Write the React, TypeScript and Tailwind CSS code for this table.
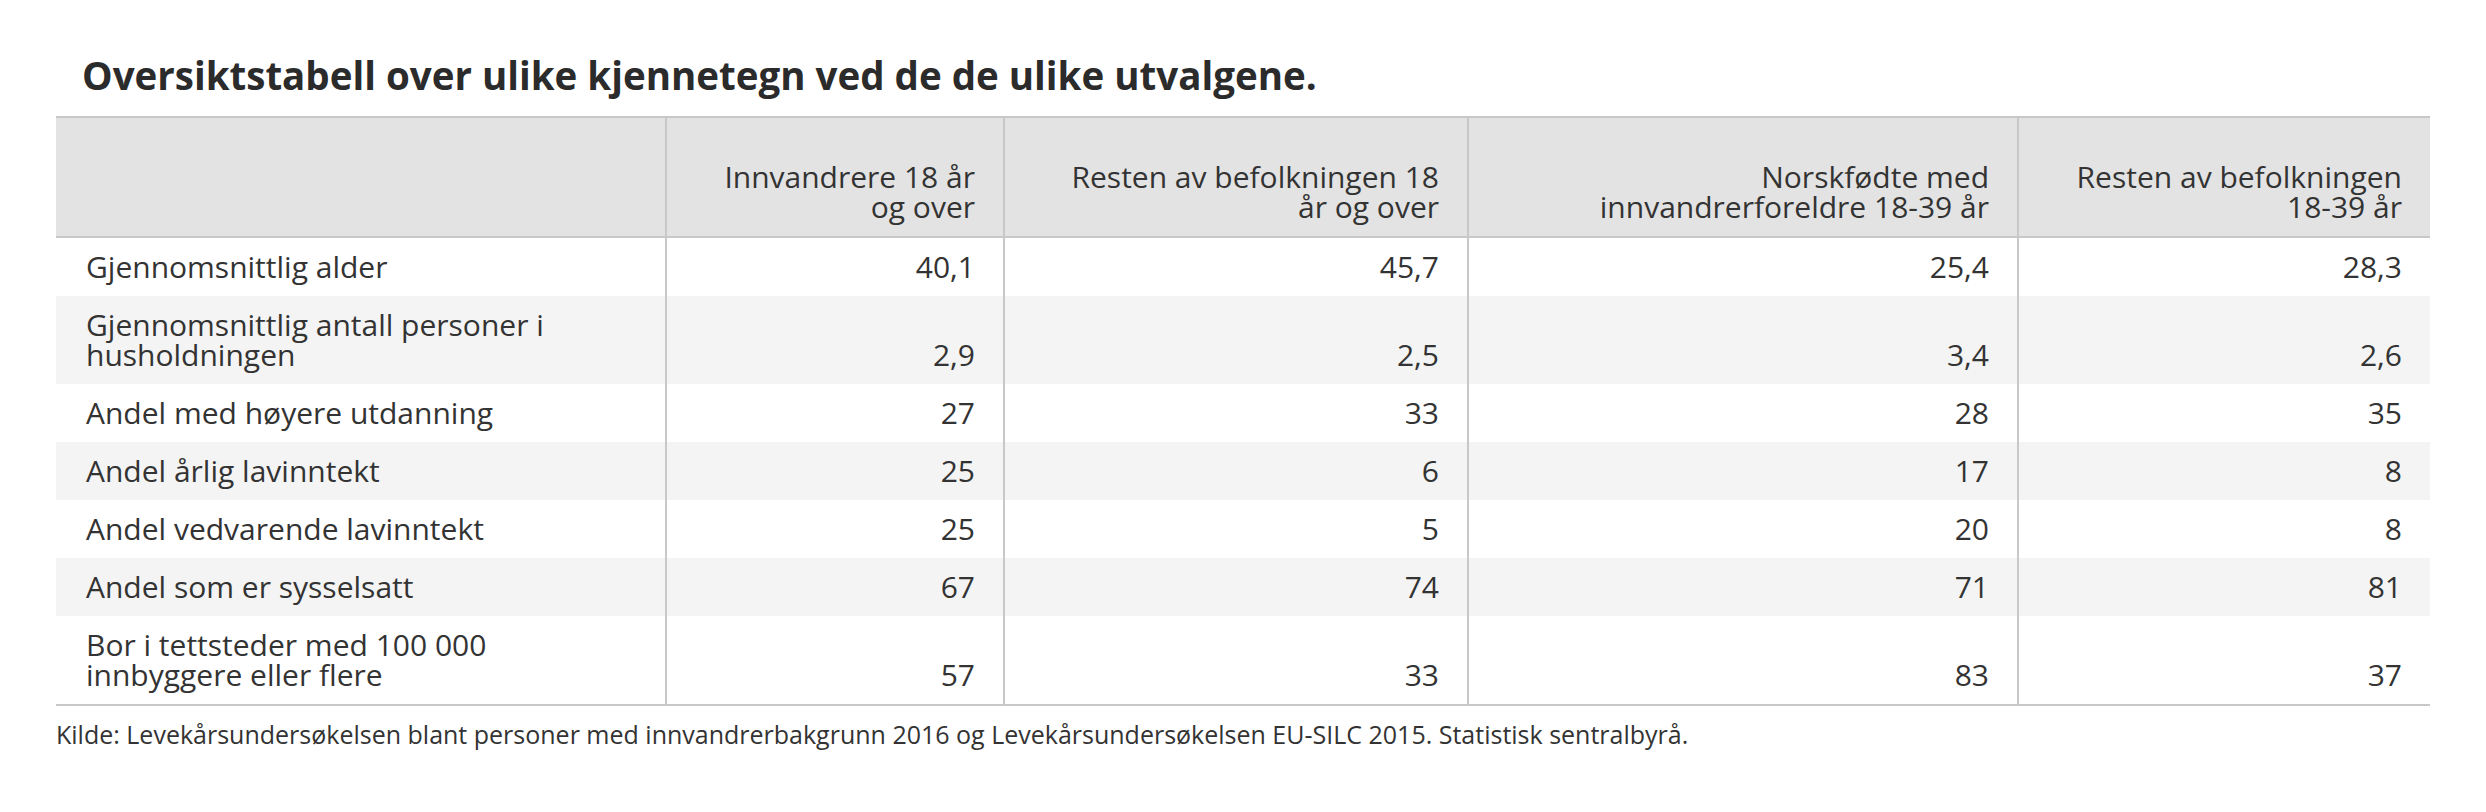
import React from "react";

const rows: { label: string[]; values: string[] }[] = [
  { label: ["Gjennomsnittlig alder"], values: ["40,1", "45,7", "25,4", "28,3"] },
  { label: ["Gjennomsnittlig antall personer i", "husholdningen"], values: ["2,9", "2,5", "3,4", "2,6"] },
  { label: ["Andel med høyere utdanning"], values: ["27", "33", "28", "35"] },
  { label: ["Andel årlig lavinntekt"], values: ["25", "6", "17", "8"] },
  { label: ["Andel vedvarende lavinntekt"], values: ["25", "5", "20", "8"] },
  { label: ["Andel som er sysselsatt"], values: ["67", "74", "71", "81"] },
  { label: ["Bor i tettsteder med 100 000", "innbyggere eller flere"], values: ["57", "33", "83", "37"] },
];

const headers: string[][] = [
  ["Innvandrere 18 år", "og over"],
  ["Resten av befolkningen 18", "år og over"],
  ["Norskfødte med", "innvandrerforeldre 18-39 år"],
  ["Resten av befolkningen", "18-39 år"],
];

export default function App() {
  return (
    <div
      className="w-[2486px] h-[812px] bg-white text-[#333333] pt-[54px] px-[56px]"
      style={{ fontFamily: '"Open Sans", "Noto Sans", sans-serif' }}
    >
      <h1 className="ml-[26px] text-[38.5px] font-bold leading-[42px] text-[#2b2b2b] mb-[20px] whitespace-nowrap">
        Oversiktstabell over ulike kjennetegn ved de de ulike utvalgene.
      </h1>
      <table className="table-fixed border-collapse w-[2374px] text-[30px] leading-[30px]">
        <colgroup>
          <col className="w-[610px]" />
          <col className="w-[338px]" />
          <col className="w-[464px]" />
          <col className="w-[550px]" />
          <col className="w-[412px]" />
        </colgroup>
        <thead>
          <tr className="bg-[#e3e3e3] border-t-2 border-b-2 border-[#c8c8c8]">
            <th className="pt-[44px] pb-[14px] px-[28px] border-r-2 border-[#c8c8c8]"></th>
            {headers.map((h, i) => (
              <th
                key={i}
                className={
                  i < headers.length - 1
                    ? "pt-[44px] pb-[14px] px-[28px] text-right align-bottom font-normal border-r-2 border-[#c8c8c8] whitespace-nowrap"
                    : "pt-[44px] pb-[14px] px-[28px] text-right align-bottom font-normal whitespace-nowrap"
                }
              >
                {h[0]}
                <br />
                {h[1]}
              </th>
            ))}
          </tr>
        </thead>
        <tbody className="border-b-2 border-[#c8c8c8]">
          {rows.map((r, ri) => (
            <tr key={ri} className={ri % 2 === 1 ? "bg-[#f4f4f4]" : "bg-white"}>
              <td className="py-[14px] pl-[30px] pr-[20px] align-top border-r-2 border-[#c8c8c8] whitespace-nowrap">
                {r.label.map((l, li) => (
                  <div key={li}>{l}</div>
                ))}
              </td>
              {r.values.map((v, vi) => (
                <td
                  key={vi}
                  className={
                    vi < r.values.length - 1
                      ? "py-[14px] px-[28px] text-right align-bottom border-r-2 border-[#c8c8c8]"
                      : "py-[14px] px-[28px] text-right align-bottom"
                  }
                >
                  {v}
                </td>
              ))}
            </tr>
          ))}
        </tbody>
      </table>
      <p className="mt-[12px] text-[25px] leading-[32px] text-[#333333] whitespace-nowrap">
        Kilde: Levekårsundersøkelsen blant personer med innvandrerbakgrunn 2016 og Levekårsundersøkelsen EU-SILC 2015. Statistisk sentralbyrå.
      </p>
    </div>
  );
}
